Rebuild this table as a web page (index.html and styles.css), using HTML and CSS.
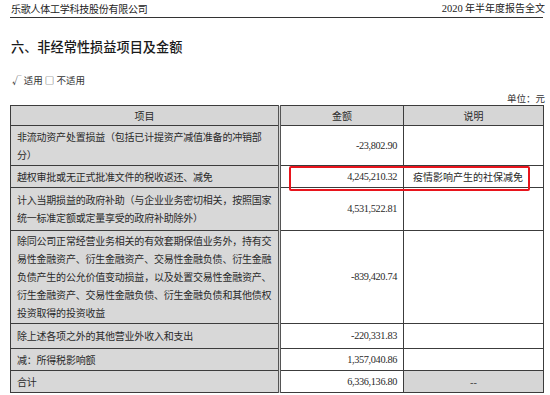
FILE: index.html
```html
<!DOCTYPE html>
<html lang="zh-CN">
<head>
<meta charset="utf-8">
<title>非经常性损益项目及金额</title>
<link rel="stylesheet" href="styles.css">
</head>
<body>
<div class="page">
  <header class="doc-head">
    <span class="company">乐歌人体工学科技股份有限公司</span>
    <span class="report"><span class="num">2020</span> 年半年度报告全文</span>
  </header>
  <h2 class="title">六、非经常性损益项目及金额</h2>
  <div class="apply">√ 适用 □ 不适用</div>
  <div class="unit">单位：元</div>
  <div class="table-wrap">
    <table class="gains">
      <colgroup>
        <col class="c-item">
        <col class="c-amt">
        <col class="c-note">
      </colgroup>
      <thead>
        <tr><th>项目</th><th>金额</th><th>说明</th></tr>
      </thead>
      <tbody>
        <tr class="r2"><td class="item">非流动资产处置损益（包括已计提资产减值准备的冲销部分）</td><td class="amt">-23,802.90</td><td class="note"></td></tr>
        <tr class="r1"><td class="item">越权审批或无正式批准文件的税收返还、减免</td><td class="amt">4,245,210.32</td><td class="note">疫情影响产生的社保减免</td></tr>
        <tr class="r2b"><td class="item">计入当期损益的政府补助（与企业业务密切相关，按照国家统一标准定额或定量享受的政府补助除外）</td><td class="amt">4,531,522.81</td><td class="note"></td></tr>
        <tr class="r5"><td class="item">除同公司正常经营业务相关的有效套期保值业务外，持有交易性金融资产、衍生金融资产、交易性金融负债、衍生金融负债产生的公允价值变动损益，以及处置交易性金融资产、衍生金融资产、交易性金融负债、衍生金融负债和其他债权投资取得的投资收益</td><td class="amt">-839,420.74</td><td class="note"></td></tr>
        <tr class="r1b"><td class="item">除上述各项之外的其他营业外收入和支出</td><td class="amt">-220,331.83</td><td class="note"></td></tr>
        <tr class="r1"><td class="item">减：所得税影响额</td><td class="amt">1,357,040.86</td><td class="note"></td></tr>
        <tr class="r1"><td class="item">合计</td><td class="amt">6,336,136.80</td><td class="note dash">--</td></tr>
      </tbody>
    </table>
    <div class="highlight"></div>
  </div>
</div>
</body>
</html>
```

FILE: styles.css
```css
html, body {
  margin: 0;
  padding: 0;
  background: #ffffff;
}

body {
  font-family: "Noto Sans CJK SC", "Liberation Serif", sans-serif;
  color: #222222;
}

.page {
  width: 533px;
  padding: 0 7px 0 10px;
}

.doc-head {
  display: flex;
  justify-content: space-between;
  align-items: flex-end;
  height: 17px;
  border-bottom: 1px solid #333333;
  font-size: 10px;
  line-height: 12px;
  color: #222;
}

.company {
  letter-spacing: -0.25px;
  margin-left: 1px;
  padding-bottom: 2px;
}

.report {
  padding-bottom: 2px;
  margin-right: -2px;
}

.num {
  font-family: "Liberation Serif", serif;
  font-size: 10.5px;
}

.title {
  margin: 21px 0 0 1px;
  font-size: 13.2px;
  line-height: 16px;
  font-weight: 500;
  color: #1a1a1a;
}

.apply {
  margin: 19px 0 0 2px;
  font-size: 9.5px;
  line-height: 12px;
  color: #333;
}

.unit {
  margin: 6px -2px 0 0;
  font-size: 9.5px;
  line-height: 12px;
  text-align: right;
  color: #333;
}

.table-wrap {
  position: relative;
  margin-top: 1px;
}

.gains {
  width: 533px;
  table-layout: fixed;
  border-collapse: collapse;
  font-size: 10px;
  line-height: 18px;
  color: #2a2a2a;
}

.c-item { width: 269px; }
.c-amt { width: 124px; }
.c-note { width: 140px; }

.gains th,
.gains td {
  border: 1px solid #3c3c3c;
  padding: 1px 6px;
  vertical-align: middle;
}

.gains th {
  background: #d6d6d6;
  font-weight: normal;
  text-align: center;
  height: 19px;
  padding: 0 6px;
}

.gains th:first-child,
.gains td.item {
  border-right: 3px double #555555;
}

.gains td.item {
  background: #d8d8d8;
  padding-left: 6px;
  padding-right: 4px;
  letter-spacing: -0.22px;
}

.gains td.amt {
  text-align: right;
  font-family: "Liberation Serif", serif;
  font-size: 10.3px;
  letter-spacing: -0.35px;
  padding-right: 6px;
}

.gains td.note {
  padding-left: 9px;
}

.gains td.dash {
  background: #d6d6d6;
  text-align: center;
  padding-left: 6px;
}

.r1 td { height: 19px; }
.r1b td { height: 22px; }
.r2 td { height: 37px; }
.r2b td { height: 40px; }
.r5 td { height: 89px; }

.highlight {
  position: absolute;
  left: 279px;
  top: 61px;
  width: 237px;
  height: 21px;
  border: 2px solid #e8141c;
  border-radius: 2px;
}
```
